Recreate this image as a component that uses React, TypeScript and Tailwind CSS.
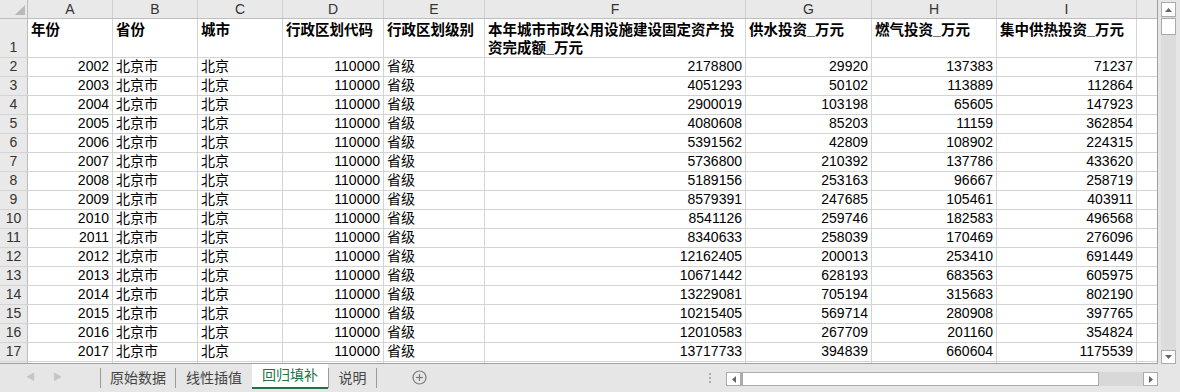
import React from 'react';

const FONT = '"Liberation Sans", "Noto Sans CJK SC", sans-serif';

const cols = [
  { key: 'A', w: 'w-[85px]' },
  { key: 'B', w: 'w-[85px]' },
  { key: 'C', w: 'w-[85px]' },
  { key: 'D', w: 'w-[101px]' },
  { key: 'E', w: 'w-[101px]' },
  { key: 'F', w: 'w-[261px]' },
  { key: 'G', w: 'w-[126px]' },
  { key: 'H', w: 'w-[125px]' },
  { key: 'I', w: 'w-[140px]' },
];

const headers = [
  '年份',
  '省份',
  '城市',
  '行政区划代码',
  '行政区划级别',
  '本年城市市政公用设施建设固定资产投资完成额_万元',
  '供水投资_万元',
  '燃气投资_万元',
  '集中供热投资_万元',
];

const data: [number, number, number, number, number][] = [
  [2002, 2178800, 29920, 137383, 71237],
  [2003, 4051293, 50102, 113889, 112864],
  [2004, 2900019, 103198, 65605, 147923],
  [2005, 4080608, 85203, 11159, 362854],
  [2006, 5391562, 42809, 108902, 224315],
  [2007, 5736800, 210392, 137786, 433620],
  [2008, 5189156, 253163, 96667, 258719],
  [2009, 8579391, 247685, 105461, 403911],
  [2010, 8541126, 259746, 182583, 496568],
  [2011, 8340633, 258039, 170469, 276096],
  [2012, 12162405, 200013, 253410, 691449],
  [2013, 10671442, 628193, 683563, 605975],
  [2014, 13229081, 705194, 315683, 802190],
  [2015, 10215405, 569714, 280908, 397765],
  [2016, 12010583, 267709, 201160, 354824],
  [2017, 13717733, 394839, 660604, 1175539],
];

const tabs = ['原始数据', '线性插值', '回归填补', '说明'];
const tabW = ['w-[75px]', 'w-[77px]', 'w-[76px]', 'w-[49px]'];

const Cell: React.FC<{ w: string; right?: boolean; children?: React.ReactNode }> = ({ w, right, children }) => (
  <div
    className={`${w} shrink-0 h-full border-r border-[#d4d4d4] flex items-end px-[3px] pb-[1px] overflow-hidden whitespace-nowrap ${right ? 'justify-end' : ''}`}
  >
    {children}
  </div>
);

const DataRow: React.FC<{ n?: number; vals: (string | number)[] }> = ({ n, vals }) => (
  <div className="flex h-[19px] border-b border-[#d4d4d4] text-[14px] leading-[17px] text-black">
    <div className="w-[28px] shrink-0 h-full bg-[#e9e9e9] border-r border-[#bdbdbd] flex items-end justify-center text-[#333] pb-[1px]">
      {n}
    </div>
    {cols.map((c, i) => (
      <Cell key={c.key} w={c.w} right={typeof vals[i] === 'number'}>
        {vals[i]}
      </Cell>
    ))}
    <div className="flex-1" />
  </div>
);

export default function App() {
  return (
    <div
      className="w-[1180px] h-[392px] flex flex-col bg-[#e6e6e6] overflow-hidden select-none"
      style={{ fontFamily: FONT }}
    >
      <div className="flex h-[364px] shrink-0">
        {/* grid */}
        <div className="w-[1158px] h-full bg-white border-r border-b border-[#a0a0a0] overflow-hidden">
          {/* column letters */}
          <div className="flex h-[19px] bg-[#e9e9e9] border-b border-[#bdbdbd] text-[14px] leading-[17px] text-[#333]">
            <div className="w-[28px] shrink-0 h-full border-r border-[#bdbdbd] relative">
              <svg className="absolute left-[15px] top-[5px]" width="10" height="10" viewBox="0 0 10 10">
                <polygon points="10,0 10,10 0,10" fill="#b9b9b9" />
              </svg>
            </div>
            {cols.map((c) => (
              <div key={c.key} className={`${c.w} shrink-0 h-full border-r border-[#cfcfcf] flex items-center justify-center`}>
                {c.key}
              </div>
            ))}
            <div className="flex-1" />
          </div>

          {/* header row 1 */}
          <div className="flex h-[39px] border-b border-[#d4d4d4] text-[14.5px] leading-[18px] font-bold text-black">
            <div className="w-[28px] shrink-0 h-full bg-[#e9e9e9] border-r border-[#bdbdbd] flex items-end justify-center text-[#333] font-normal text-[14px] pb-[1px]">
              1
            </div>
            {cols.map((c, i) => (
              <div key={c.key} className={`${c.w} shrink-0 h-full border-r border-[#d4d4d4] px-[3px] pt-[2px] overflow-hidden break-all`}>
                {headers[i]}
              </div>
            ))}
            <div className="flex-1" />
          </div>

          {data.map((r, i) => (
            <DataRow key={r[0]} n={i + 2} vals={[r[0], '北京市', '北京', 110000, '省级', r[1], r[2], r[3], r[4]]} />
          ))}
          <DataRow vals={['', '', '', '', '', '', '', '', '']} />
        </div>

        {/* vertical scrollbar */}
        <div className="flex-1 h-full flex pl-[3px] pt-[2px]">
          <div className="w-[15px] h-[362px] bg-[#dcdcdc] flex flex-col">
            <div className="h-[15px] bg-white border border-[#ababab] flex items-center justify-center">
              <svg width="7" height="4" viewBox="0 0 7 4"><polygon points="3.5,0 7,4 0,4" fill="#666" /></svg>
            </div>
            <div className="h-[17px] mt-[1px] bg-white border border-[#ababab]" />
            <div className="flex-1" />
            <div className="h-[14px] bg-white border border-[#ababab] flex items-center justify-center">
              <svg width="7" height="4" viewBox="0 0 7 4"><polygon points="0,0 7,0 3.5,4" fill="#666" /></svg>
            </div>
          </div>
        </div>
      </div>

      {/* sheet tabs bar */}
      <div className="flex h-[28px] items-start text-[14px] text-[#444]">
        <div className="w-[100px] h-full flex items-center shrink-0">
          <span className="ml-[26px] text-[9px] text-[#c4c4c4]">◀</span>
          <span className="ml-[18px] text-[9px] text-[#c4c4c4]">▶</span>
        </div>
        {tabs.map((t, i) =>
          i === 2 ? (
            <div key={t} className={`${tabW[i]} shrink-0 h-[25px] bg-white border-b-[2px] border-[#217346] text-[#217346] flex items-center justify-center`}>
              {t}
            </div>
          ) : (
            <div
              key={t}
              className={`${tabW[i]} shrink-0 h-[20px] mt-[4px] flex items-center justify-center border-l border-[#9a9a9a] ${i === 3 ? 'border-r' : ''}`}
            >
              {t}
            </div>
          )
        )}
        <div className="w-[65px] h-full flex items-center shrink-0 pl-[35px] pb-[1px]">
          <svg width="15" height="15" viewBox="0 0 15 15">
            <circle cx="7.5" cy="7.5" r="6.5" fill="none" stroke="#7a7a7a" strokeWidth="1.2" />
            <line x1="7.5" y1="4" x2="7.5" y2="11" stroke="#7a7a7a" strokeWidth="1.2" />
            <line x1="4" y1="7.5" x2="11" y2="7.5" stroke="#7a7a7a" strokeWidth="1.2" />
          </svg>
        </div>
        <div className="flex-1 h-full flex items-center justify-end pr-[15px]">
          <div className="flex flex-col gap-[2px]">
            <span className="w-[2px] h-[2px] bg-[#adadad]" />
            <span className="w-[2px] h-[2px] bg-[#adadad]" />
            <span className="w-[2px] h-[2px] bg-[#adadad]" />
          </div>
        </div>
        {/* horizontal scrollbar */}
        <div className="w-[432px] h-[14px] mt-[8px] bg-[#d8d8d8] flex shrink-0">
          <div className="w-[15px] h-full bg-white border border-[#ababab] flex items-center justify-center">
            <svg width="4" height="7" viewBox="0 0 4 7"><polygon points="4,0 4,7 0,3.5" fill="#666" /></svg>
          </div>
          <div className="w-[358px] h-full bg-white border border-[#ababab] border-l-[2px]" />
          <div className="flex-1" />
          <div className="w-[15px] h-full bg-white border border-[#ababab] flex items-center justify-center">
            <svg width="4" height="7" viewBox="0 0 4 7"><polygon points="0,0 4,3.5 0,7" fill="#666" /></svg>
          </div>
        </div>
        <div className="w-[22px] shrink-0" />
      </div>
    </div>
  );
}
